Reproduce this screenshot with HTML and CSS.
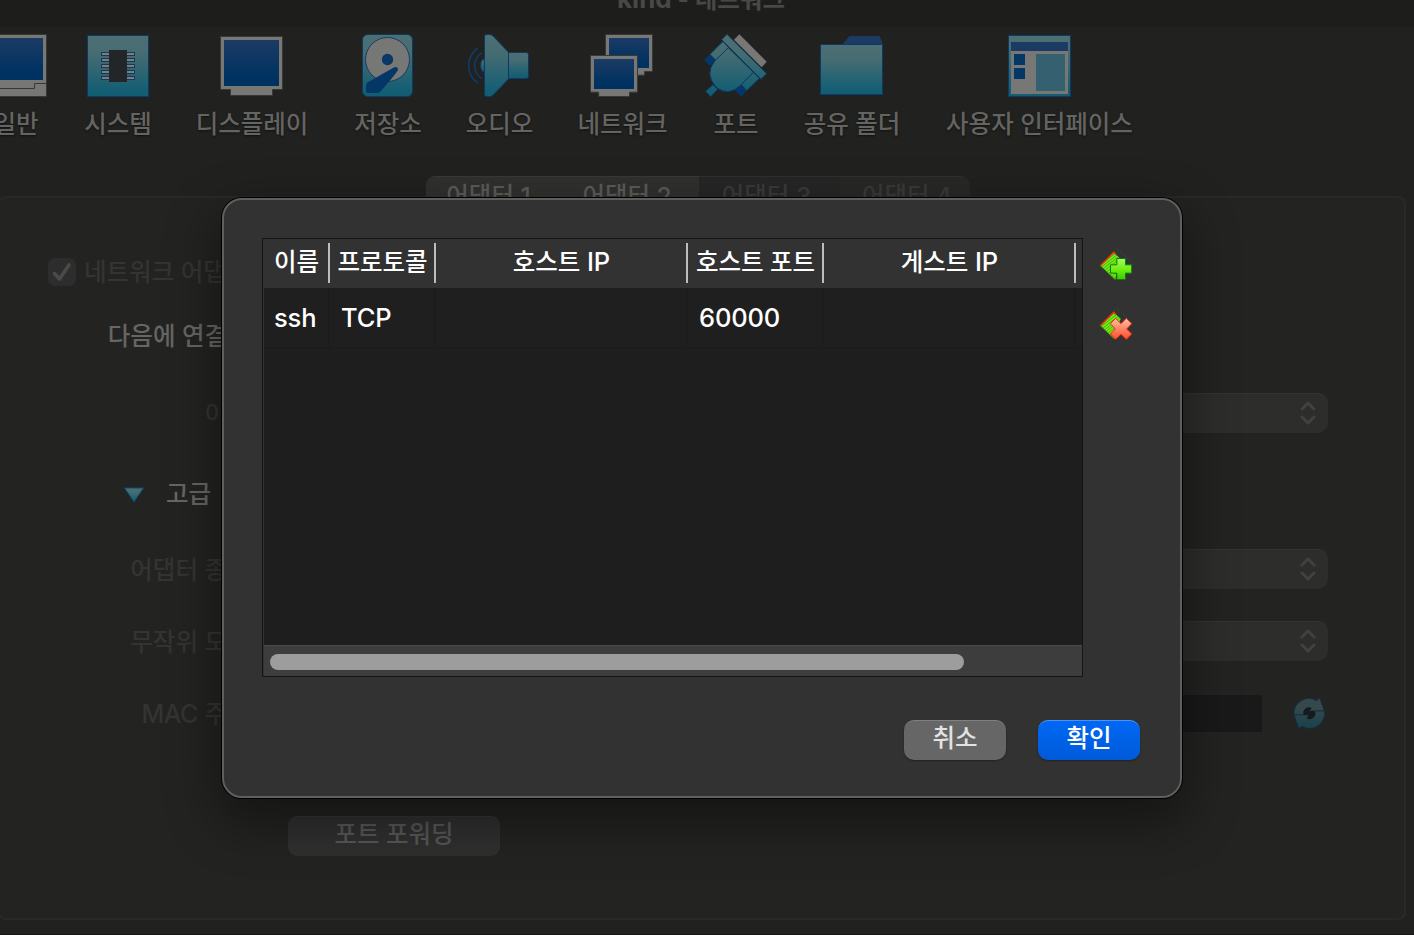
FILE: index.html
```html
<!DOCTYPE html>
<html lang="ko">
<head>
<meta charset="utf-8">
<title>kind - 네트워크</title>
<link rel="stylesheet" href="styles.css">
</head>
<body>
<svg class="defs" aria-hidden="true">
  <defs>
    <linearGradient id="teal" x1="0" y1="0" x2="0" y2="1"><stop offset="0" stop-color="#4d6f74"/><stop offset=".3" stop-color="#466c72"/><stop offset=".9" stop-color="#145e73"/></linearGradient>
    <linearGradient id="navy" x1="0" y1="0" x2="0" y2="1"><stop offset="0" stop-color="#1b3b64"/><stop offset=".8" stop-color="#003261"/></linearGradient>
    <linearGradient id="plug" gradientUnits="userSpaceOnUse" x1="0" y1="102" x2="0" y2="291"><stop offset="0" stop-color="#4d6f74"/><stop offset=".3" stop-color="#466c72"/><stop offset=".9" stop-color="#145e73"/></linearGradient>
    <linearGradient id="dim" gradientUnits="userSpaceOnUse" x1="0" y1="954" x2="0" y2="1047"><stop offset=".35" stop-color="#35494c"/><stop offset=".9" stop-color="#1c424b"/></linearGradient>
    <linearGradient id="lime" x1="0" y1="0" x2="0" y2="1"><stop offset="0" stop-color="#a6f56a"/><stop offset=".5" stop-color="#71f010"/><stop offset="1" stop-color="#3fc800"/></linearGradient>
    <linearGradient id="red" x1="0" y1="0" x2="0" y2="1"><stop offset="0" stop-color="#ffc0a8"/><stop offset="1" stop-color="#ff4a28"/></linearGradient>
    <pattern id="stripe" width="7" height="7" patternUnits="userSpaceOnUse" patternTransform="rotate(-38)"><rect width="7" height="7" fill="#78ea18"/><rect width="7" height="2.5" fill="#46b800"/></pattern>
  </defs>
</svg>
<div class="window">
  <header class="titlebar"><span class="lat">kind</span> - 네트워크</header>
  <nav class="toolbar">
    <div class="tool"><svg viewBox="-48 102 192 192"><path d="M-46 103.500H139.500V289.500H-46Z" fill="#777775" stroke="#383836" stroke-width="3"/><rect x="-36" y="114" width="165" height="126" fill="url(#navy)"/><path d="M-46 265.500H103.500V250.500H139" fill="none" stroke="#383836" stroke-width="3"/></svg><span>일반</span></div>
    <div class="tool"><svg viewBox="258 102 192 192"><rect x="262.500" y="106.500" width="183" height="183" fill="url(#teal)" stroke="#0b3a66" stroke-width="3"/><g fill="#7d7d80" stroke="#16395b" stroke-width="3"><rect x="304.500" y="157.500" width="99" height="9"/><rect x="304.500" y="175.500" width="99" height="9"/><rect x="304.500" y="193.500" width="99" height="9"/><rect x="304.500" y="211.500" width="99" height="9"/><rect x="304.500" y="229.500" width="99" height="9"/></g><rect x="327" y="150" width="54" height="96" fill="#222629"/></svg><span>시스템</span></div>
    <div class="tool"><svg viewBox="660 102 192 192"><path d="M661.500 109.500H847.500V268.500H817.500V286.500H691.500V268.500H661.500Z" fill="#777775" stroke="#383836" stroke-width="3"/><rect x="672" y="120" width="165" height="138" fill="url(#navy)"/></svg><span>디스플레이</span></div>
    <div class="tool"><svg viewBox="78 102 192 192"><rect x="97.500" y="103.500" width="150" height="186" rx="16" fill="url(#teal)" stroke="#0b3a66" stroke-width="3"/><circle cx="172.500" cy="178.500" r="66" fill="#777775" stroke="#1b3b64" stroke-width="3"/><circle cx="172.500" cy="178.500" r="17" fill="#093766"/><path d="M190 203Q204 197 204 209Q203 215 152 274Q148 279 140 279H114Q108 279 108 272V256Q108 249 116 245Z" fill="#053766"/></svg><span>저장소</span></div>
    <div class="tool"><svg viewBox="414 102 192 192"><g fill="url(#teal)" stroke="#0b3a66" stroke-width="3"><path d="M463 177Q452 178 452 197Q452 215 463 216Z"/><path d="M463.500 109Q464 103.500 470 103.500H480Q485 104 490 109L535.500 157V237L490 284Q485 289.500 480 289.500H470Q464 289.500 463.500 284Z"/><path d="M535.500 157.500H589Q595.500 158 595.500 164V229Q595.500 235.500 589 235.500H535.500Z"/></g><path d="M443 144Q416 165 416 197Q416 229 443 249M456 158Q434 173 434 197Q434 222 456 236" fill="none" stroke="#113a64" stroke-width="5"/></svg><span>오디오</span></div>
    <div class="tool"><svg viewBox="783 102 192 192"><g fill="#777775" stroke="#383836" stroke-width="3"><path d="M826.500 103.500H967.500V214.500H943.500V225.500H850V214.500H826.500Z"/></g><rect x="837" y="114" width="120" height="90" fill="url(#navy)"/><path d="M781.500 166.500H922.500V276.500H898.500V289.500H806V276.500H781.500Z" fill="#777775" stroke="#383836" stroke-width="3"/><rect x="792" y="177" width="120" height="90" fill="url(#navy)"/></svg><span>네트워크</span></div>
    <div class="tool"><svg viewBox="72 102 192 192"><path d="M178 103L260 185L245 202L162 119Z" fill="#777775"/><path d="M90 163L107 181L90 198L72 180ZM183 253L200 272L184 290L165 271Z" fill="#053766"/><g fill="url(#plug)" stroke="#0b3a66" stroke-width="3"><path d="M129 124L146 143L107 181L90 163ZM220 217L238 235L200 272L183 253ZM99 254L77 274L92 290L113 268Z"/><path d="M145 143L220 217L183 255Q145 291 109 262Q72 222 105 182Z"/><path d="M141 103L260 221L243 238L125 119Z"/></g></svg><span>포트</span></div>
    <div class="tool"><svg viewBox="420 102 192 192"><path d="M488 133L508 108H599L609 133Z" fill="#1b3b64"/><rect x="421.500" y="133.500" width="186" height="150" fill="url(#teal)" stroke="#0b3a66" stroke-width="3"/></svg><span>공유 폴더</span></div>
    <div class="tool"><svg viewBox="984 102 192 192"><rect x="985.500" y="106.500" width="186" height="183" fill="url(#teal)" stroke="#0b3a66" stroke-width="3"/><rect x="993" y="126" width="171" height="156" fill="#777775"/><rect x="993" y="126" width="171" height="27" fill="#1b3b64"/><path d="M1002 162h33v33h-33zM1002 204h33v33h-33z" fill="#053766"/><rect x="1068" y="162" width="87" height="111" fill="#34606f"/></svg><span>사용자 인터페이스</span></div>
  </nav>
  <main class="content">
    <div class="tabs"><span class="tab on">어댑터 1</span><span class="tab on">어댑터 2</span><span class="tab mid">어댑터 3</span><span class="tab">어댑터 4</span></div>
    <section class="panel">
      <div class="row check"><span class="box"><svg viewBox="0 0 28 28"><path d="M6.500 15.500L11.500 21L21 7" fill="none" stroke="#4a4a48" stroke-width="3.600" stroke-linecap="round" stroke-linejoin="round"/></svg></span><span class="faint">네트워크 어댑터</span></div>
      <div class="row"><label class="bright">다음에 연결됨:</label></div>
      <div class="row"><label>이름:</label><div class="combo"><svg viewBox="0 0 16 24"><path d="M2 8L8 2L14 8M2 16L8 22L14 16"/></svg></div></div>
      <div class="row advanced"><svg viewBox="0 0 20 16"><path d="M.5 1H19.500L10 15Z" fill="url(#teal)" stroke="#0b4a76"/></svg><span>고급</span></div>
      <div class="row"><label>어댑터 종류:</label><div class="combo"><svg viewBox="0 0 16 24"><path d="M2 8L8 2L14 8M2 16L8 22L14 16"/></svg></div></div>
      <div class="row"><label>무작위 모드:</label><div class="combo"><svg viewBox="0 0 16 24"><path d="M2 8L8 2L14 8M2 16L8 22L14 16"/></svg></div></div>
      <div class="row mac"><label><span class="lat">MAC</span> 주소:</label><div class="field"></div><svg class="refresh" viewBox="400 952 96 96"><g fill="url(#dim)" stroke="#0f2d47" stroke-width="2.500"><path d="M403 1006A45 45 0 0 1 471 963L480 954L494 994H448L455 986A16 16 0 0 0 433 1006Z"/><path d="M494 994A45 45 0 0 1 427 1040L417 1047L403 1006H448L442 1015A16 16 0 0 0 464 994Z"/></g><path d="M455 985A16 16 0 0 0 433 1006H448L442 1016A16 16 0 0 0 464 994H448Z" fill="#161b1e"/></svg></div>
      <div class="row forward"><span class="button">포트 포워딩</span></div>
    </section>
  </main>
</div>
<div class="dialog">
  <div class="upper">
    <div class="table">
      <div class="thead"><span>이름</span><span>프로토콜</span><span>호스트 <b class="lat">IP</b></span><span>호스트 포트</span><span>게스트 <b class="lat">IP</b></span></div>
      <div class="trow"><span>ssh</span><span>TCP</span><span></span><span>60000</span><span></span></div>
      <div class="empty"></div>
      <div class="scroll"><div class="thumb"></div></div>
    </div>
    <div class="side">
      <svg viewBox="60 51 99 99"><path d="M102 61L110 54L156 98" fill="none" stroke="#35661d" stroke-width="2" stroke-dasharray="3 3"/><path d="M61 107L101 67L118 83L106 149Z" fill="url(#stripe)"/><path d="M106 149L61 107L101 67L108 73" fill="none" stroke="#2f9a10" stroke-width="3"/><path d="M61 107L101 67L107 73" fill="none" stroke="#f02a10" stroke-width="4.500"/><path d="M110.500 85.500H136.500V104.500H155V129.500H136.500V148.500H110.500V129.500H91.500V104.500H110.500Z" fill="url(#lime)" stroke="#0c7a10" stroke-width="3"/></svg>
      <svg viewBox="60 231 99 99"><path d="M102 241L110 234L156 278" fill="none" stroke="#35661d" stroke-width="2" stroke-dasharray="3 3"/><path d="M61 287L101 247L122 266L104 327Z" fill="url(#stripe)"/><path d="M102 326L61 287L101 247L110 255" fill="none" stroke="#2f9a10" stroke-width="3"/><path d="M61 287L101 247L107 253" fill="none" stroke="#f02a10" stroke-width="4.500"/><path d="M107 265L123 281L139 265L155 281L140 297L155 312L139 328L123 313L107 328L91 312L106 297L91 281Z" fill="url(#red)" stroke="#f02a10" stroke-width="3" stroke-linejoin="round"/></svg>
    </div>
  </div>
  <div class="actions"><span class="action cancel">취소</span><span class="action ok">확인</span></div>
</div>
</body>
</html>
```
FILE: styles.css
```css
* { box-sizing: border-box; }
body {
  margin: 0;
  width: 1414px;
  height: 935px;
  overflow: hidden;
  position: relative;
  background: #21211f;
  font-family: Inter, "Noto Sans CJK KR", sans-serif;
  font-size: 24.5px;
  font-weight: 500;
  line-height: 32px;
  color: #646462;
  white-space: nowrap;
}
svg { display: block; }
.defs { position: absolute; width: 0; height: 0; }
.lat { font-size: 25.5px; font-weight: inherit; }
.window { height: 935px; border-bottom: 1px solid #171716; }
.titlebar {
  height: 28px;
  padding-right: 12px;
  overflow: hidden;
  display: flex;
  justify-content: center;
  align-items: flex-end;
  white-space: pre;
  line-height: 34px;
  padding-bottom: 11px;
  background: #1d1d1b;
  border-bottom: 1px solid #20201e;
  font-weight: 700;
  color: #484846;
}
.titlebar .lat { font-size: 26px; }
.toolbar {
  display: grid;
  grid-template-columns: 88px 116px 152px 120px 103px 143px 84px 148px 227px;
  height: 148px;
  margin-left: -28px;
  padding-top: 6px;
}
.tool { display: flex; flex-direction: column; align-items: center; gap: 10px; text-shadow: 0 1px 2px #111; }
.tool svg { width: 64px; height: 64px; overflow: visible; }
.tabs {
  display: flex;
  width: 544px;
  height: 40px;
  margin-left: 426px;
  border-radius: 9px;
  overflow: hidden;
  position: relative;
}
.tab { flex: 0 0 140px; text-align: center; padding: 3px 4px 0 0; background: #282826; border-top: 1px solid #30302e; color: #3a3a38; }
.tab:first-child { flex-basis: 133px; padding-right: 8px; }
.tab.on { background: #30302e; border-color: #393937; color: #5b5b59; }
.tab.mid { background: #262626; border-right: 1px solid #242424; }
.panel {
  width: 1408px;
  height: 724px;
  margin: -20px 0 0 -2px;
  padding-top: 42px;
  border: 2px solid #292927;
  border-radius: 8px;
  background: #232321;
  display: grid;
  grid-template-rows: 64px 64px 90px 72px 78px 66px 80px 164px;
  color: #343432;
}
.row { display: flex; align-items: center; gap: 8px; }
.row label { width: 257px; margin-right: -1px; padding-top: 1px; text-align: right; }
.row label.bright, .advanced span { color: #666664; padding-top: 0; }
.check { padding-left: 48px; }
.box { width: 28px; height: 28px; border-radius: 7px; background: #2d2d2d; }
.combo {
  width: 1064px;
  height: 40px;
  border-radius: 10px;
  background: #2d2d2c;
  border-top: 1px solid #333332;
  display: flex;
  justify-content: flex-end;
  align-items: center;
  padding: 0 12px 2px 0;
}
.combo svg { width: 16px; height: 24px; fill: none; stroke: #414140; stroke-width: 3; stroke-linecap: round; stroke-linejoin: round; }
.advanced { padding-left: 124px; gap: 22px; }
.advanced svg { width: 20px; height: 16px; margin-top: 2px; }
.mac { padding-bottom: 2px; }
.mac label { padding-top: 2px; }
.mac .lat { font-size: 25px; letter-spacing: -.5px; }
.field { width: 998px; height: 37px; background: #191919; }
.refresh { width: 32px; height: 32px; margin-left: 23px; }
.forward { padding-left: 288px; }
.button {
  width: 212px;
  height: 40px;
  border-radius: 9px;
  background: #303031;
  border-top: 1px solid #363636;
  text-align: center;
  line-height: 34px;
  color: #585856;
}
.dialog {
  position: absolute;
  left: 222px;
  top: 198px;
  width: 960px;
  height: 600px;
  border: 2px solid #5f5f5f;
  border-radius: 20px;
  background: #323232;
  box-shadow: 0 0 0 1px #000, 0 20px 50px 6px rgba(0, 0, 0, .4);
  padding: 38px;
  color: #fff;
}
.upper { display: flex; gap: 17px; }
.table { width: 821px; height: 439px; border: 1px solid #141414; display: flex; flex-direction: column; background: #1e1e1e; box-shadow: inset 1px 0 #323232; }
.thead, .trow { display: grid; grid-template-columns: 66px 106px 252px 136px 252px; margin-left: 1px; }
.thead { height: 49px; background: #323232; padding-top: 4px; }
.thead span { height: 40px; border-right: 2px solid #bdbdbd; text-align: center; line-height: 38px; padding-left: 1px; }
.trow { height: 60px; background: #1f1f1f; border-bottom: 1px solid #1a1a1a; }
.trow span { border-right: 1px solid #1a1a1a; margin-right: 1px; padding-left: 10px; line-height: 59px; font-size: 25.5px; letter-spacing: -.15px; }
.trow span + span { padding-left: 11px; }
.empty { flex: 1; }
.scroll { height: 31px; margin-left: 1px; padding: 8px 6px; background: #3d3d3d; border-top: 1px solid #4b4b4b; }
.thumb { width: 694px; height: 16px; border-radius: 8px; background: #9d9d9d; }
.side { display: flex; flex-direction: column; gap: 27px; padding-top: 9px; }
.side svg { width: 33px; height: 33px; }
.actions { display: flex; justify-content: flex-end; gap: 32px; padding: 43px 2px 0 0; }
.action { width: 102px; height: 40px; border-radius: 10px; text-align: center; line-height: 34px; box-shadow: 0 1px 2px rgba(0, 0, 0, .35); }
.cancel { background: #666; border-top: 1px solid #808080; color: #e2e2e2; }
.ok { background: linear-gradient(#0068f4, #005ad8); border-top: 1px solid #4a94f6; }
```
